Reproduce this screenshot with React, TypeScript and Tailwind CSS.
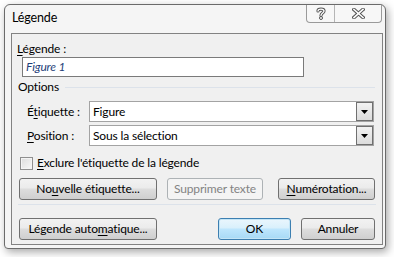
import React from 'react';

const font = "font-['Segoe_UI','Lato',sans-serif]";

const Btn = ({ children, w, primary, disabled }: { children: React.ReactNode; w: string; primary?: boolean; disabled?: boolean }) => {
  let cls = 'border-[#707070] bg-[linear-gradient(#f2f2f2_0%,#ebebeb_45%,#dddddd_50%,#cfcfcf_100%)] text-black';
  if (primary) cls = 'border-[#3c7fb1] bg-[linear-gradient(#eaf6fd_0%,#d9f0fc_45%,#bee6fd_50%,#a7d9f5_100%)] text-black shadow-[inset_0_0_0_1px_#c4e5f6]';
  if (disabled) cls = 'border-[#adb2b5] bg-[#f4f4f4] text-[#838383]';
  return (
    <div className={`${w} h-[22px] rounded-[3px] border flex items-center justify-center leading-[16px] ${cls}`}>
      {children}
    </div>
  );
};

const Combo = ({ value }: { value: string }) => (
  <div className="w-[285px] h-[21px] border border-[#a3a3a3] bg-white flex items-center justify-between">
    <span className="pl-[3px] leading-[16px]">{value}</span>
    <div className="w-[17px] h-[19px] border border-[#707070] bg-[linear-gradient(#f2f2f2,#dcdcdc)] flex items-center justify-center">
      <svg width="7" height="4" viewBox="0 0 7 4">
        <polygon points="0,0 7,0 3.5,4" fill="#000" />
      </svg>
    </div>
  </div>
);

export default function App() {
  return (
    <div className={`w-[394px] h-[257px] bg-white pt-[4px] pl-[4px] text-[12px] tracking-[-0.15px] text-black ${font}`}>
      <div className="w-[382px] h-[245px] border border-[#6b6b6b] rounded-t-[6px] rounded-b-[4px] bg-[#f5f5f5] shadow-[2px_3px_8px_rgba(0,0,0,0.35)] flex flex-col">
        {/* title bar */}
        <div className="h-[28px] flex items-start justify-between">
          <span className="ml-[7px] mt-[5px] leading-[16px] text-[12.5px]">Légende</span>
          <div className="mr-[3px] h-[18px] flex border border-t-0 border-[#9a9a9a] rounded-b-[4px] bg-[#f7f7f7]">
            <div className="w-[28px] flex items-center justify-center border-r border-[#b5b5b5]">
              <svg width="10" height="13" viewBox="0 0 10 13">
                <path d="M2 4 C2 1.5 8 1.5 8 4 C8 6 5 6 5 8.5" fill="none" stroke="#555" strokeWidth="3.2" strokeLinecap="round" />
                <path d="M2 4 C2 1.5 8 1.5 8 4 C8 6 5 6 5 8.5" fill="none" stroke="#fff" strokeWidth="1.3" strokeLinecap="round" />
                <circle cx="5" cy="11" r="1.5" fill="#fff" stroke="#555" strokeWidth="1" />
              </svg>
            </div>
            <div className="w-[46px] flex items-center justify-center">
              <svg width="13" height="11" viewBox="0 0 13 11">
                <path d="M2 1.5 L11 9.5 M11 1.5 L2 9.5" stroke="#555" strokeWidth="3.6" strokeLinecap="square" />
                <path d="M2 1.5 L11 9.5 M11 1.5 L2 9.5" stroke="#fff" strokeWidth="1.6" strokeLinecap="square" />
              </svg>
            </div>
          </div>
        </div>

        {/* client area */}
        <div className="ml-[6px] mr-[2px] mb-[3px] flex-1 border border-[#828282] bg-[#f0f0f0] flex flex-col">
          <div className="mt-[7px] ml-[5px] leading-[16px]">
            <u className="underline-offset-2">L</u>égende :
          </div>
          <div className="ml-[10px] w-[282px] h-[20px] border border-[#7a7a7a] bg-white flex items-center">
            <span className="pl-[3px] italic text-[#1f3f7a] leading-[16px]">Figure 1</span>
          </div>

          <div className="mt-[2px] ml-[6px] flex items-center mr-[7px]">
            <span className="leading-[16px]">Options</span>
            <div className="ml-[6px] flex-1 h-px bg-[#dce2ea]" />
          </div>

          <div className="mt-[6px] flex flex-col gap-[3px]">
            <div className="flex items-center">
              <span className="pl-[15px] w-[77px] leading-[16px]">
                É<u className="underline-offset-2">t</u>iquette :
              </span>
              <Combo value="Figure" />
            </div>
            <div className="flex items-center">
              <span className="pl-[15px] w-[77px] leading-[16px]">
                <u className="underline-offset-2">P</u>osition :
              </span>
              <Combo value="Sous la sélection" />
            </div>
          </div>

          <div className="mt-[9px] ml-[8px] flex items-center">
            <div className="w-[13px] h-[13px] border border-[#8f8f8f] bg-[linear-gradient(135deg,#dcdcdc,#f8f8f8)] shadow-[inset_0_0_0_1px_#f4f4f4]" />
            <span className="ml-[4px] leading-[16px]">
              <u className="underline-offset-2">E</u>xclure l'étiquette de la légende
            </span>
          </div>

          <div className="mt-[7px] mx-[7px] flex items-center">
            <Btn w="w-[138px]">
              No<u className="underline-offset-2">u</u>velle étiquette...
            </Btn>
            <div className="ml-[10px]">
              <Btn w="w-[96px]" disabled>Supprimer texte</Btn>
            </div>
            <div className="ml-auto">
              <Btn w="w-[97px]">
                <span>
                  <u className="underline-offset-2">N</u>umérotation...
                </span>
              </Btn>
            </div>
          </div>

          <div className="mt-[4px] mx-[6px] h-px bg-[#dce2ea]" />

          <div className="mt-[13px] mx-[7px] flex items-center">
            <Btn w="w-[138px]">
              <span>
                Légende auto<u className="underline-offset-2">m</u>atique...
              </span>
            </Btn>
            <div className="ml-auto flex gap-[10px]">
              <Btn w="w-[73px]" primary>OK</Btn>
              <Btn w="w-[74px]">Annuler</Btn>
            </div>
          </div>
        </div>
      </div>
    </div>
  );
}
